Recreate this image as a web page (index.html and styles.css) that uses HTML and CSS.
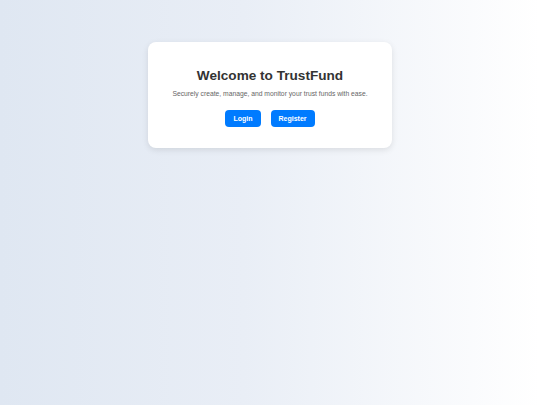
FILE: index.html
```html
<!DOCTYPE html>
<html>
<head>
<meta charset="utf-8">
<link rel="stylesheet" href="styles.css">
</head>
<body>
<main class="page">
  <section class="card">
    <h1 class="title">Welcome to TrustFund</h1>
    <p class="subtitle">Securely create, manage, and monitor your trust funds with ease.</p>
    <div class="actions">
      <button class="btn">Login</button>
      <button class="btn">Register</button>
    </div>
  </section>
</main>
</body>
</html>
```

FILE: styles.css
```css
html, body {
  margin: 0;
  height: 100%;
}
body {
  background: linear-gradient(to right, #dfe7f2 0%, #e9eef6 45%, #ffffff 100%);
  font-family: "Liberation Sans", Arial, sans-serif;
}
.page {
  display: flex;
  justify-content: center;
  padding-top: 42px;
}
.card {
  width: 244px;
  box-sizing: border-box;
  background: #ffffff;
  border-radius: 8px;
  box-shadow: 0 2px 6px rgba(0, 0, 0, 0.1);
  padding: 26px 10px 21px;
  text-align: center;
}
.title {
  margin: 0;
  font-size: 13.6px;
  font-weight: bold;
  color: #333333;
  line-height: 16px;
}
.subtitle {
  margin: 5px 0 0;
  font-size: 6.75px;
  color: #666666;
  line-height: 9px;
}
.actions {
  display: flex;
  justify-content: center;
  gap: 10px;
  margin-top: 12px;
}
.btn {
  background: #007bff;
  color: #ffffff;
  border: none;
  border-radius: 4px;
  font-family: "Liberation Sans", Arial, sans-serif;
  font-weight: bold;
  font-size: 7px;
  height: 17px;
  padding: 0 8px;
  cursor: pointer;
}
```
